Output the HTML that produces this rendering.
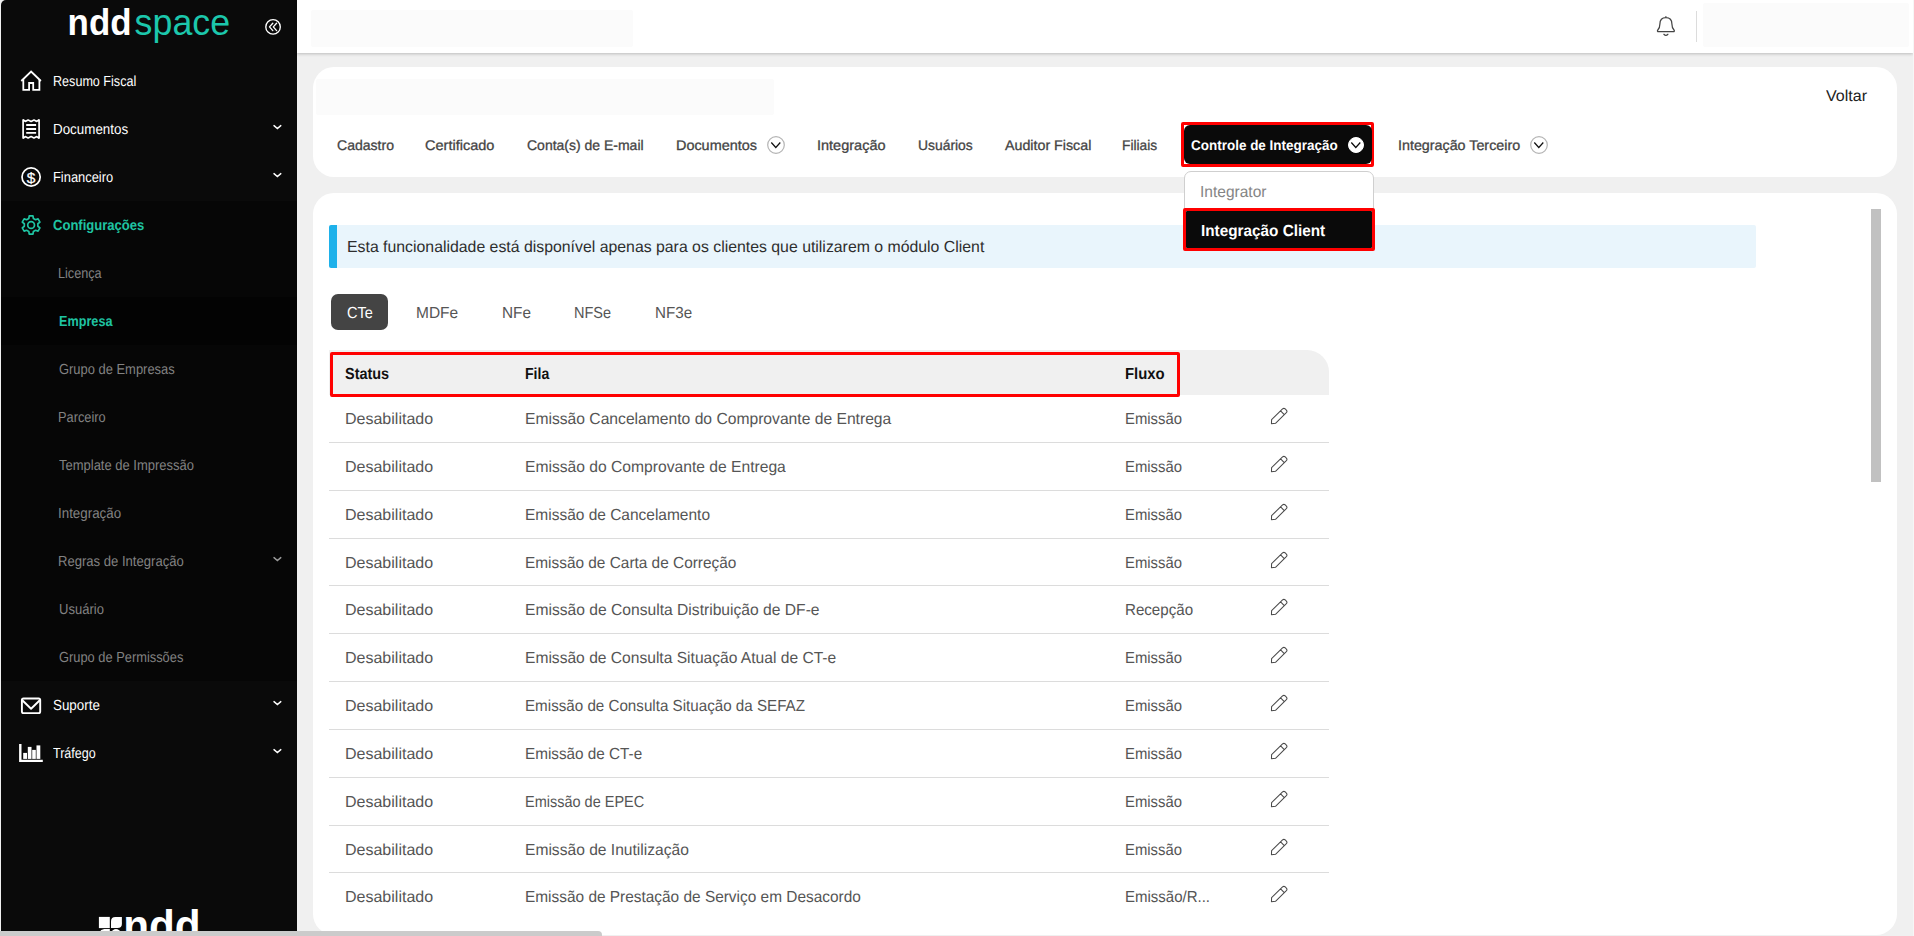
<!DOCTYPE html>
<html lang="pt-BR">
<head>
<meta charset="utf-8">
<title>nddspace - Empresa - Controle de Integração</title>
<style>
html,body{margin:0;padding:0}
ul,li,p{margin:0;padding:0;list-style:none}
a{text-decoration:none}
body{width:1914px;height:936px;overflow:hidden;position:relative;background:#f0f0f0;font-family:"Liberation Sans", Arial, sans-serif;}
.abs{position:absolute}
.t{position:absolute;white-space:pre;line-height:20px;transform-origin:0 50%;display:block;text-rendering:geometricPrecision}
#side{position:absolute;left:1px;top:0;width:296px;height:932px;background:#0a0a0a;border-top-left-radius:5px}
#side .dark{position:absolute;left:0;top:200.5px;width:296px;height:480px;background:#060606}
#top{position:absolute;left:297px;top:0;width:1615.6px;height:52.5px;background:#fff;box-shadow:0 1px 3px rgba(0,0,0,.22)}
.blur{position:absolute;background:#fbfbfb;border-radius:2px}
.card{position:absolute;background:#fff;border-radius:21px}
#alert{position:absolute;left:329px;top:225px;width:1419px;height:42.8px;background:#e9f5fc;border-left:8px solid #1eb1ea;border-radius:2px}
#pill{position:absolute;left:331px;top:294px;width:57px;height:36px;border-radius:7px;background:#444}
#th{position:absolute;left:329px;top:350px;width:1000px;height:44.8px;background:#f0f0f0;border-top-right-radius:22px}
.red{position:absolute;border:3px solid #ff0000;box-sizing:border-box;border-radius:2px}
.rl{position:absolute;left:329px;width:1000px;height:1px;background:#dcdcdc}
.pen{position:absolute;left:1270px}
#dd{position:absolute;left:1184px;top:171px;width:189.5px;height:78px;box-sizing:border-box;background:#fff;border:1px solid #cfcfcf;border-radius:7px}
.blk{position:absolute;background:#0a0a0a}
#hs{position:absolute;left:0;top:931.2px;width:1914px;height:5px}
#hs i{position:absolute;left:0;top:0;width:601.5px;height:6px;background:#cbcbcb;border-top-right-radius:4px}
#vs{position:absolute;left:1871px;top:209px;width:10px;height:273px;background:#c1c1c1}
</style>
</head>
<body>
<nav id="side">
<div class="dark"></div>
<div class="abs" style="left:0;top:297px;width:296px;height:48px;background:#030303"></div>
</nav>
<ul class="menu">
<li class="t" style="left:52.62px;top:72px;font-size:14.6px;color:#fff;transform:scaleX(0.8626);">Resumo Fiscal</li>
<li class="t" style="left:52.55px;top:120px;font-size:14.6px;color:#fff;transform:scaleX(0.9171);">Documentos</li>
<li class="t" style="left:52.60px;top:168px;font-size:14.6px;color:#fff;transform:scaleX(0.8830);">Financeiro</li>
<li class="t" style="left:53.25px;top:216px;font-size:14.6px;color:#1fc4a2;transform:scaleX(0.8941);font-weight:700;">Configurações</li>
<li class="t" style="left:58.42px;top:264px;font-size:14.6px;color:#828282;transform:scaleX(0.8673);">Licença</li>
<li class="t" style="left:58.63px;top:312px;font-size:14.6px;color:#1fc4a2;transform:scaleX(0.8675);font-weight:700;">Empresa</li>
<li class="t" style="left:58.84px;top:360px;font-size:14.6px;color:#828282;transform:scaleX(0.8859);">Grupo de Empresas</li>
<li class="t" style="left:58.40px;top:408px;font-size:14.6px;color:#828282;transform:scaleX(0.8762);">Parceiro</li>
<li class="t" style="left:59.28px;top:456px;font-size:14.6px;color:#828282;transform:scaleX(0.8896);">Template de Impressão</li>
<li class="t" style="left:58.36px;top:504px;font-size:14.6px;color:#828282;transform:scaleX(0.9145);">Integração</li>
<li class="t" style="left:58.38px;top:552px;font-size:14.6px;color:#828282;transform:scaleX(0.8960);">Regras de Integração</li>
<li class="t" style="left:58.61px;top:600px;font-size:14.6px;color:#828282;transform:scaleX(0.8923);">Usuário</li>
<li class="t" style="left:58.84px;top:648px;font-size:14.6px;color:#828282;transform:scaleX(0.8809);">Grupo de Permissões</li>
<li class="t" style="left:53.01px;top:696px;font-size:14.6px;color:#fff;transform:scaleX(0.9166);">Suporte</li>
<li class="t" style="left:53.49px;top:744px;font-size:14.6px;color:#fff;transform:scaleX(0.8592);">Tráfego</li>
</ul>
<svg class="abs" style="left:60px;top:0" width="180" height="50" viewBox="60 0 180 50">
<text x="67.6" y="34.6" font-family='"Liberation Sans", Arial, sans-serif' font-size="37" font-weight="700" fill="#fff" textLength="64" lengthAdjust="spacingAndGlyphs">ndd</text>
<text x="134.6" y="34.6" font-family='"Liberation Sans", Arial, sans-serif' font-size="37" font-weight="400" fill="#1cc7ac" textLength="95.5" lengthAdjust="spacingAndGlyphs">space</text>
</svg>
<svg class="abs" style="left:263px;top:17px" width="20" height="20" viewBox="263 17 20 20" fill="none" stroke="#fff" stroke-width="1.35" stroke-linecap="round" stroke-linejoin="round">
<circle cx="273.05" cy="26.9" r="7.25"/>
<path d="M272.8 23.2 L269.5 26.9 L272.8 30.6 M276.6 23.2 L273.3 26.9 L276.6 30.6"/>
</svg>
<svg class="abs" style="left:15px;top:65px" width="32" height="32" viewBox="15 65 32 32" fill="none" stroke="#fff" stroke-width="1.8" stroke-linejoin="miter">
<path d="M21.3 81 L31.1 71.6 L40.9 81"/>
<path d="M23.3 79.3 V89.9 H29.1 V83 H33.2 V89.9 H39.4 V79.3"/>
</svg>
<svg class="abs" style="left:15px;top:113px" width="32" height="32" viewBox="15 113 32 32" fill="none" stroke="#fff" stroke-width="1.7" stroke-linejoin="bevel">
<path d="M23.1 119.6 L25.2 121.4 L28.1 119.9 L31.1 121.4 L34 119.9 L36.8 121.4 L39.1 119.6 V138.4 L36.8 136.6 L34 138.1 L31.1 136.6 L28.1 138.1 L25.2 136.6 L23.1 138.4 Z"/>
<path d="M26.2 125 H36.1 M26.2 129 H36.1 M26.2 132.9 H36.1" stroke-width="1.9"/>
</svg>
<svg class="abs" style="left:15px;top:161px" width="32" height="32" viewBox="15 161 32 32">
<circle cx="31.1" cy="177" r="9.1" fill="none" stroke="#fff" stroke-width="1.7"/>
<text x="31.1" y="182.6" text-anchor="middle" font-family='"Liberation Sans", Arial, sans-serif' font-size="15.5" font-weight="400" fill="#fff" stroke="#fff" stroke-width="0.25">$</text>
</svg>
<svg class="abs" style="left:15px;top:209px" width="32" height="32" viewBox="15 209 32 32" fill="none" stroke="#1fc4a2" stroke-width="1.7" stroke-linejoin="round">
<path d="M33.40 218.50 L32.95 215.89 L29.25 215.89 L28.80 218.50 L26.62 219.75 L24.13 218.84 L22.28 222.05 L24.32 223.74 L24.32 226.26 L22.28 227.95 L24.13 231.16 L26.62 230.25 L28.80 231.50 L29.25 234.11 L32.95 234.11 L33.40 231.50 L35.58 230.25 L38.07 231.16 L39.92 227.95 L37.88 226.26 L37.88 223.74 L39.92 222.05 L38.07 218.84 L35.58 219.75Z"/>
<circle cx="31.1" cy="225" r="3.4"/>
</svg>
<svg class="abs" style="left:15px;top:690px" width="32" height="32" viewBox="15 690 32 32" fill="none" stroke="#fff" stroke-width="1.9" stroke-linejoin="round">
<rect x="21.9" y="698.5" width="18.3" height="14.6" rx="1.6"/>
<path d="M22.3 700.3 L31.05 708.8 L39.8 700.3"/>
</svg>
<svg class="abs" style="left:15px;top:738px" width="32" height="32" viewBox="15 738 32 32" fill="#fff">
<path d="M19.1 743.9 H21.5 V759.8 H42.8 V762 H19.1 Z"/>
<rect x="23.2" y="752.9" width="3.8" height="6"/>
<rect x="27.8" y="746.9" width="3.7" height="12"/>
<rect x="32.2" y="749.9" width="3.6" height="9"/>
<rect x="36.5" y="745.4" width="3.8" height="13.5"/>
</svg>
<svg class="abs" style="left:272px;top:123px" width="12" height="9" viewBox="-2 -2 12 9"><path d="M0 0.6 L3.4 3.5 L6.8 0.6" fill="none" stroke="#fff" stroke-width="1.45" stroke-linecap="round" stroke-linejoin="miter"/></svg>
<svg class="abs" style="left:272px;top:171px" width="12" height="9" viewBox="-2 -2 12 9"><path d="M0 0.6 L3.4 3.5 L6.8 0.6" fill="none" stroke="#fff" stroke-width="1.45" stroke-linecap="round" stroke-linejoin="miter"/></svg>
<svg class="abs" style="left:272px;top:555px" width="12" height="9" viewBox="-2 -2 12 9"><path d="M0 0.6 L3.4 3.5 L6.8 0.6" fill="none" stroke="#9a9a9a" stroke-width="1.45" stroke-linecap="round" stroke-linejoin="miter"/></svg>
<svg class="abs" style="left:272px;top:699px" width="12" height="9" viewBox="-2 -2 12 9"><path d="M0 0.6 L3.4 3.5 L6.8 0.6" fill="none" stroke="#fff" stroke-width="1.45" stroke-linecap="round" stroke-linejoin="miter"/></svg>
<svg class="abs" style="left:272px;top:747px" width="12" height="9" viewBox="-2 -2 12 9"><path d="M0 0.6 L3.4 3.5 L6.8 0.6" fill="none" stroke="#fff" stroke-width="1.45" stroke-linecap="round" stroke-linejoin="miter"/></svg>
<svg class="abs" style="left:95px;top:900px" width="112" height="32" viewBox="95 900 112 32">
<g fill="#fff">
<rect x="98.9" y="916.9" width="10.9" height="11.2"/>
<path d="M115.4 916.9 H121.9 V923.7 Q121.9 928.1 117.5 928.1 H111 V921.3 Q111 916.9 115.4 916.9 Z"/>
<path d="M104.2 928.9 H109.8 V941 H98.9 V934 Q99.6 929.4 104.2 928.9 Z"/>
<path d="M111 934 Q111.6 929.2 116 928.9 Q120.4 929.2 121 934 V941 H111 Z"/>
</g>
<text x="123.2" y="941" font-family='"Liberation Sans", Arial, sans-serif' font-size="44.5" font-weight="700" fill="#fff" textLength="77.5" lengthAdjust="spacingAndGlyphs">ndd</text>
</svg>

<header id="top">
<div class="blur" style="left:14px;top:10px;width:322px;height:36.5px"></div>
<div class="blur" style="left:1406px;top:3px;width:206px;height:43.5px"></div>
<div class="abs" style="left:1399px;top:11px;width:1px;height:31px;background:#dcdcdc"></div>
</header>
<svg class="abs" style="left:1654px;top:13px" width="24" height="26" viewBox="1654 13 24 26" fill="none" stroke="#444" stroke-width="1.25" stroke-linecap="round" stroke-linejoin="round">
<path d="M1665.9 16.6 V17.6 M1665.9 17.6 C1661.6 17.6 1659.9 20.8 1659.9 24 C1659.9 27.4 1658.9 28.8 1657.8 30 C1657.1 30.8 1657.5 31.7 1658.5 31.7 H1673.3 C1674.3 31.7 1674.7 30.8 1674 30 C1672.9 28.8 1671.9 27.4 1671.9 24 C1671.9 20.8 1670.2 17.6 1665.9 17.6 Z"/>
<path d="M1663.9 34.3 Q1665.9 36.4 1667.9 34.3"/>
</svg>

<section class="card" style="left:313px;top:66.6px;width:1584px;height:110.4px">
<div class="blur" style="left:3px;top:12.4px;width:458px;height:35.6px"></div>
</section>
<section class="card" style="left:313px;top:192.7px;width:1584px;height:742.3px"></section>
<svg class="abs" style="left:764.9px;top:133.9px" width="22" height="22" viewBox="-11 -11 22 22"><circle r="8.3" fill="#fff" stroke="#b4b4b4" stroke-width="1.2"/><path d="M-4.7 -2.5 L-0.2 2.5 L4.3 -2.5" fill="none" stroke="#111" stroke-width="1.25" stroke-linecap="butt" stroke-linejoin="miter"/></svg>
<svg class="abs" style="left:1528.1px;top:133.9px" width="22" height="22" viewBox="-11 -11 22 22"><circle r="8.3" fill="#fff" stroke="#b4b4b4" stroke-width="1.2"/><path d="M-4.7 -2.5 L-0.2 2.5 L4.3 -2.5" fill="none" stroke="#111" stroke-width="1.25" stroke-linecap="butt" stroke-linejoin="miter"/></svg>
<div class="red" style="left:1181px;top:122px;width:193px;height:45px"></div>
<div class="blk" style="left:1184px;top:125px;width:187.5px;height:39px;border-radius:6px"></div>
<svg class="abs" style="left:1345.1px;top:133.9px" width="22" height="22" viewBox="-11 -11 22 22"><circle r="7.5" fill="#fff" stroke="#fff" stroke-width="1"/><path d="M-4.7 -2.5 L-0.2 2.5 L4.3 -2.5" fill="none" stroke="#0a0a0a" stroke-width="1.25" stroke-linecap="butt" stroke-linejoin="miter"/></svg>
<ul class="tabs">
<li class="t" style="left:336.50px;top:135px;font-size:14px;color:#444;transform:scaleX(1.0027);-webkit-text-stroke:0.3px #444;">Cadastro</li>
<li class="t" style="left:425.28px;top:135px;font-size:14px;color:#444;transform:scaleX(1.0364);-webkit-text-stroke:0.3px #444;">Certificado</li>
<li class="t" style="left:526.60px;top:135px;font-size:14px;color:#444;transform:scaleX(0.9991);-webkit-text-stroke:0.3px #444;">Conta(s) de E-mail</li>
<li class="t" style="left:675.57px;top:135px;font-size:14px;color:#444;transform:scaleX(1.0291);-webkit-text-stroke:0.3px #444;">Documentos</li>
<li class="t" style="left:817.01px;top:135px;font-size:14px;color:#444;transform:scaleX(1.0357);-webkit-text-stroke:0.3px #444;">Integração</li>
<li class="t" style="left:917.51px;top:135px;font-size:14px;color:#444;transform:scaleX(0.9907);-webkit-text-stroke:0.3px #444;">Usuários</li>
<li class="t" style="left:1004.50px;top:135px;font-size:14px;color:#444;transform:scaleX(1.0179);-webkit-text-stroke:0.3px #444;">Auditor Fiscal</li>
<li class="t" style="left:1122.22px;top:135px;font-size:14px;color:#444;transform:scaleX(0.9826);-webkit-text-stroke:0.3px #444;">Filiais</li>
<li class="t" style="left:1397.72px;top:135px;font-size:14px;color:#444;transform:scaleX(1.0212);-webkit-text-stroke:0.3px #444;">Integração Terceiro</li>
<li class="t" style="left:1190.72px;top:135px;font-size:14px;color:#fff;transform:scaleX(0.9624);font-weight:700;">Controle de Integração</li>
</ul>
<a class="t" style="left:1826.15px;top:87px;font-size:15.8px;color:#222;transform:scaleX(1.0150);">Voltar</a>
<div id="alert"></div>
<p class="t" style="left:346.86px;top:238px;font-size:16px;color:#2e2e2e;transform:scaleX(0.9897);">Esta funcionalidade está disponível apenas para os clientes que utilizarem o módulo Client</p>
<div id="pill"></div>
<ul class="pills">
<li class="t" style="left:346.82px;top:304px;font-size:16px;color:#fff;transform:scaleX(0.9074);">CTe</li>
<li class="t" style="left:415.89px;top:304px;font-size:16px;color:#555;transform:scaleX(0.9677);">MDFe</li>
<li class="t" style="left:501.60px;top:304px;font-size:16px;color:#555;transform:scaleX(0.9593);">NFe</li>
<li class="t" style="left:573.77px;top:304px;font-size:16px;color:#555;transform:scaleX(0.9077);">NFSe</li>
<li class="t" style="left:654.52px;top:304px;font-size:16px;color:#555;transform:scaleX(0.9477);">NF3e</li>
</ul>
<div class="table" role="table">
<div id="th" role="row"></div>
<div class="red" style="left:330px;top:351.7px;width:850px;height:45.3px"></div>
<div class="t" style="left:345.45px;top:365px;font-size:16px;color:#111;transform:scaleX(0.9026);font-weight:700;">Status</div>
<div class="t" style="left:525.22px;top:365px;font-size:16px;color:#111;transform:scaleX(0.8785);font-weight:700;">Fila</div>
<div class="t" style="left:1124.97px;top:365px;font-size:16px;color:#111;transform:scaleX(0.9293);font-weight:700;">Fluxo</div>
<div class="tr" role="row">
<div class="t" style="left:344.85px;top:410px;font-size:16px;color:#555;transform:scaleX(1.0006);">Desabilitado</div>
<div class="t" style="left:524.68px;top:410px;font-size:16px;color:#555;transform:scaleX(0.9782);">Emissão Cancelamento do Comprovante de Entrega</div>
<div class="t" style="left:1124.74px;top:410px;font-size:16px;color:#555;transform:scaleX(0.9277);">Emissão</div>
<svg class="pen" style="top:406.80px" width="18" height="18" viewBox="-1 -1 18 18"><path d="M0.45 15.75 L0.6 11.6 L11.55 0.95 Q12.9 -0.25 14.2 0.95 L15.35 2.1 Q16.55 3.4 15.35 4.65 L4.5 15.3 Z M9.6 2.9 L13.3 6.6" fill="none" stroke="#4a4a4a" stroke-width="1.05" stroke-linejoin="round" stroke-linecap="round"/></svg><div class="rl" style="top:442px"></div>
</div>
<div class="tr" role="row">
<div class="t" style="left:344.85px;top:458px;font-size:16px;color:#555;transform:scaleX(1.0006);">Desabilitado</div>
<div class="t" style="left:524.68px;top:458px;font-size:16px;color:#555;transform:scaleX(0.9774);">Emissão do Comprovante de Entrega</div>
<div class="t" style="left:1124.74px;top:458px;font-size:16px;color:#555;transform:scaleX(0.9277);">Emissão</div>
<svg class="pen" style="top:454.80px" width="18" height="18" viewBox="-1 -1 18 18"><path d="M0.45 15.75 L0.6 11.6 L11.55 0.95 Q12.9 -0.25 14.2 0.95 L15.35 2.1 Q16.55 3.4 15.35 4.65 L4.5 15.3 Z M9.6 2.9 L13.3 6.6" fill="none" stroke="#4a4a4a" stroke-width="1.05" stroke-linejoin="round" stroke-linecap="round"/></svg><div class="rl" style="top:490px"></div>
</div>
<div class="tr" role="row">
<div class="t" style="left:344.85px;top:506px;font-size:16px;color:#555;transform:scaleX(1.0006);">Desabilitado</div>
<div class="t" style="left:524.69px;top:506px;font-size:16px;color:#555;transform:scaleX(0.9675);">Emissão de Cancelamento</div>
<div class="t" style="left:1124.74px;top:506px;font-size:16px;color:#555;transform:scaleX(0.9277);">Emissão</div>
<svg class="pen" style="top:502.80px" width="18" height="18" viewBox="-1 -1 18 18"><path d="M0.45 15.75 L0.6 11.6 L11.55 0.95 Q12.9 -0.25 14.2 0.95 L15.35 2.1 Q16.55 3.4 15.35 4.65 L4.5 15.3 Z M9.6 2.9 L13.3 6.6" fill="none" stroke="#4a4a4a" stroke-width="1.05" stroke-linejoin="round" stroke-linecap="round"/></svg><div class="rl" style="top:538px"></div>
</div>
<div class="tr" role="row">
<div class="t" style="left:344.85px;top:554px;font-size:16px;color:#555;transform:scaleX(1.0006);">Desabilitado</div>
<div class="t" style="left:524.70px;top:554px;font-size:16px;color:#555;transform:scaleX(0.9621);">Emissão de Carta de Correção</div>
<div class="t" style="left:1124.74px;top:554px;font-size:16px;color:#555;transform:scaleX(0.9277);">Emissão</div>
<svg class="pen" style="top:550.80px" width="18" height="18" viewBox="-1 -1 18 18"><path d="M0.45 15.75 L0.6 11.6 L11.55 0.95 Q12.9 -0.25 14.2 0.95 L15.35 2.1 Q16.55 3.4 15.35 4.65 L4.5 15.3 Z M9.6 2.9 L13.3 6.6" fill="none" stroke="#4a4a4a" stroke-width="1.05" stroke-linejoin="round" stroke-linecap="round"/></svg><div class="rl" style="top:585px"></div>
</div>
<div class="tr" role="row">
<div class="t" style="left:344.85px;top:601px;font-size:16px;color:#555;transform:scaleX(1.0006);">Desabilitado</div>
<div class="t" style="left:524.68px;top:601px;font-size:16px;color:#555;transform:scaleX(0.9770);">Emissão de Consulta Distribuição de DF-e</div>
<div class="t" style="left:1124.72px;top:601px;font-size:16px;color:#555;transform:scaleX(0.9443);">Recepção</div>
<svg class="pen" style="top:597.80px" width="18" height="18" viewBox="-1 -1 18 18"><path d="M0.45 15.75 L0.6 11.6 L11.55 0.95 Q12.9 -0.25 14.2 0.95 L15.35 2.1 Q16.55 3.4 15.35 4.65 L4.5 15.3 Z M9.6 2.9 L13.3 6.6" fill="none" stroke="#4a4a4a" stroke-width="1.05" stroke-linejoin="round" stroke-linecap="round"/></svg><div class="rl" style="top:633px"></div>
</div>
<div class="tr" role="row">
<div class="t" style="left:344.85px;top:649px;font-size:16px;color:#555;transform:scaleX(1.0006);">Desabilitado</div>
<div class="t" style="left:524.68px;top:649px;font-size:16px;color:#555;transform:scaleX(0.9746);">Emissão de Consulta Situação Atual de CT-e</div>
<div class="t" style="left:1124.74px;top:649px;font-size:16px;color:#555;transform:scaleX(0.9277);">Emissão</div>
<svg class="pen" style="top:645.80px" width="18" height="18" viewBox="-1 -1 18 18"><path d="M0.45 15.75 L0.6 11.6 L11.55 0.95 Q12.9 -0.25 14.2 0.95 L15.35 2.1 Q16.55 3.4 15.35 4.65 L4.5 15.3 Z M9.6 2.9 L13.3 6.6" fill="none" stroke="#4a4a4a" stroke-width="1.05" stroke-linejoin="round" stroke-linecap="round"/></svg><div class="rl" style="top:681px"></div>
</div>
<div class="tr" role="row">
<div class="t" style="left:344.85px;top:697px;font-size:16px;color:#555;transform:scaleX(1.0006);">Desabilitado</div>
<div class="t" style="left:524.71px;top:697px;font-size:16px;color:#555;transform:scaleX(0.9482);">Emissão de Consulta Situação da SEFAZ</div>
<div class="t" style="left:1124.74px;top:697px;font-size:16px;color:#555;transform:scaleX(0.9277);">Emissão</div>
<svg class="pen" style="top:693.80px" width="18" height="18" viewBox="-1 -1 18 18"><path d="M0.45 15.75 L0.6 11.6 L11.55 0.95 Q12.9 -0.25 14.2 0.95 L15.35 2.1 Q16.55 3.4 15.35 4.65 L4.5 15.3 Z M9.6 2.9 L13.3 6.6" fill="none" stroke="#4a4a4a" stroke-width="1.05" stroke-linejoin="round" stroke-linecap="round"/></svg><div class="rl" style="top:729px"></div>
</div>
<div class="tr" role="row">
<div class="t" style="left:344.85px;top:745px;font-size:16px;color:#555;transform:scaleX(1.0006);">Desabilitado</div>
<div class="t" style="left:524.71px;top:745px;font-size:16px;color:#555;transform:scaleX(0.9549);">Emissão de CT-e</div>
<div class="t" style="left:1124.74px;top:745px;font-size:16px;color:#555;transform:scaleX(0.9277);">Emissão</div>
<svg class="pen" style="top:741.80px" width="18" height="18" viewBox="-1 -1 18 18"><path d="M0.45 15.75 L0.6 11.6 L11.55 0.95 Q12.9 -0.25 14.2 0.95 L15.35 2.1 Q16.55 3.4 15.35 4.65 L4.5 15.3 Z M9.6 2.9 L13.3 6.6" fill="none" stroke="#4a4a4a" stroke-width="1.05" stroke-linejoin="round" stroke-linecap="round"/></svg><div class="rl" style="top:777px"></div>
</div>
<div class="tr" role="row">
<div class="t" style="left:344.85px;top:793px;font-size:16px;color:#555;transform:scaleX(1.0006);">Desabilitado</div>
<div class="t" style="left:524.77px;top:793px;font-size:16px;color:#555;transform:scaleX(0.9056);">Emissão de EPEC</div>
<div class="t" style="left:1124.74px;top:793px;font-size:16px;color:#555;transform:scaleX(0.9277);">Emissão</div>
<svg class="pen" style="top:789.80px" width="18" height="18" viewBox="-1 -1 18 18"><path d="M0.45 15.75 L0.6 11.6 L11.55 0.95 Q12.9 -0.25 14.2 0.95 L15.35 2.1 Q16.55 3.4 15.35 4.65 L4.5 15.3 Z M9.6 2.9 L13.3 6.6" fill="none" stroke="#4a4a4a" stroke-width="1.05" stroke-linejoin="round" stroke-linecap="round"/></svg><div class="rl" style="top:825px"></div>
</div>
<div class="tr" role="row">
<div class="t" style="left:344.85px;top:841px;font-size:16px;color:#555;transform:scaleX(1.0006);">Desabilitado</div>
<div class="t" style="left:524.68px;top:841px;font-size:16px;color:#555;transform:scaleX(0.9750);">Emissão de Inutilização</div>
<div class="t" style="left:1124.74px;top:841px;font-size:16px;color:#555;transform:scaleX(0.9277);">Emissão</div>
<svg class="pen" style="top:837.80px" width="18" height="18" viewBox="-1 -1 18 18"><path d="M0.45 15.75 L0.6 11.6 L11.55 0.95 Q12.9 -0.25 14.2 0.95 L15.35 2.1 Q16.55 3.4 15.35 4.65 L4.5 15.3 Z M9.6 2.9 L13.3 6.6" fill="none" stroke="#4a4a4a" stroke-width="1.05" stroke-linejoin="round" stroke-linecap="round"/></svg><div class="rl" style="top:872px"></div>
</div>
<div class="tr" role="row">
<div class="t" style="left:344.85px;top:888px;font-size:16px;color:#555;transform:scaleX(1.0006);">Desabilitado</div>
<div class="t" style="left:524.70px;top:888px;font-size:16px;color:#555;transform:scaleX(0.9632);">Emissão de Prestação de Serviço em Desacordo</div>
<div class="t" style="left:1124.73px;top:888px;font-size:16px;color:#555;transform:scaleX(0.9375);">Emissão/R...</div>
<svg class="pen" style="top:884.80px" width="18" height="18" viewBox="-1 -1 18 18"><path d="M0.45 15.75 L0.6 11.6 L11.55 0.95 Q12.9 -0.25 14.2 0.95 L15.35 2.1 Q16.55 3.4 15.35 4.65 L4.5 15.3 Z M9.6 2.9 L13.3 6.6" fill="none" stroke="#4a4a4a" stroke-width="1.05" stroke-linejoin="round" stroke-linecap="round"/></svg>
</div>
</div>
<div id="vs"></div>
<div id="dd"></div>
<div class="red" style="left:1183px;top:208px;width:192px;height:43px"></div>
<div class="blk" style="left:1186px;top:211px;width:186px;height:37px;border-radius:1px"></div>
<ul class="ddl">
<li class="t" style="left:1200.34px;top:183px;font-size:16px;color:#858585;transform:scaleX(0.9708);">Integrator</li>
<li class="t" style="left:1200.84px;top:222px;font-size:16px;color:#fff;transform:scaleX(0.9569);font-weight:700;">Integração Client</li>
</ul>


<div class="abs" style="left:1913px;top:0;width:1px;height:936px;background:#f6f6f6"></div>
<div id="hs"><i></i></div>
</body>
</html>
